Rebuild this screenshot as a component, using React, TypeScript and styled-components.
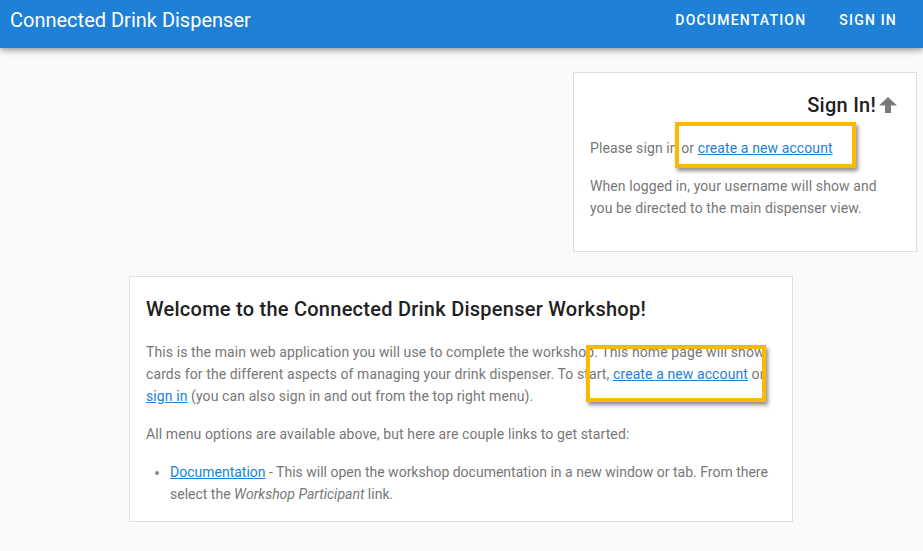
import React from "react";
import styled, { createGlobalStyle } from "styled-components";

const GlobalStyle = createGlobalStyle`
  body {
    margin: 0;
    background: #fafafa;
    font-family: Roboto, "Liberation Sans", Arial, sans-serif;
  }
`;

const AppBar = styled.header`
  height: 48px;
  box-sizing: border-box;
  padding: 0 10px 8px;
  background: #1e80d6;
  color: #ffffff;
  display: flex;
  align-items: center;
  justify-content: space-between;
  box-shadow: 0 2px 4px -1px rgba(0, 0, 0, 0.2), 0 4px 5px 0 rgba(0, 0, 0, 0.14),
    0 1px 10px 0 rgba(0, 0, 0, 0.12);
`;

const Title = styled.h1`
  margin: 0;
  font-size: 20px;
  font-weight: 400;
`;

const Nav = styled.nav`
  display: flex;
  gap: 1px;
  margin-right: 16px;
`;

const NavButton = styled.a`
  color: #ffffff;
  font-size: 14px;
  font-weight: 500;
  letter-spacing: 1.2px;
  text-transform: uppercase;
  padding: 8px 16px;
  text-decoration: none;
  cursor: pointer;
  &:last-child {
    padding-right: 0;
  }
`;

const Main = styled.main`
  display: flex;
  flex-direction: column;
  padding: 24px 6px 24px 5px;
`;

const Card = styled.section<{ $width: number; $align: string }>`
  position: relative;
  box-sizing: border-box;
  width: ${(p) => p.$width}px;
  align-self: ${(p) => p.$align};
  background: #ffffff;
  border: 1px solid #e0e0e0;
  padding: 16px;
  & + & {
    margin-top: 24px;
  }
`;

const Heading = styled.h2<{ $right?: boolean }>`
  margin: 0 0 16px;
  font-size: 20px;
  line-height: 32px;
  font-weight: 500;
  color: #212121;
  letter-spacing: 0.25px;
  display: flex;
  align-items: center;
  justify-content: ${(p) => (p.$right ? "flex-end" : "flex-start")};
  gap: 3px;
  padding-right: ${(p) => (p.$right ? 3 : 0)}px;
`;

const Text = styled.p`
  margin: 0 0 16px;
  font-size: 14px;
  line-height: 22px;
  letter-spacing: 0.1px;
  color: #777777;
  &:last-child {
    margin-bottom: 0;
  }
`;

const Link = styled.a`
  color: #1e80d6;
  text-decoration: underline;
  cursor: pointer;
`;

const List = styled.ul`
  margin: 0;
  padding-left: 24px;
  font-size: 14px;
  line-height: 22px;
  color: #777777;
  li::marker {
    font-size: 13px;
    color: #888888;
  }
`;

const Highlight = styled.div<{ $left: number; $top: number; $w: number; $h: number }>`
  position: absolute;
  left: ${(p) => p.$left}px;
  top: ${(p) => p.$top}px;
  width: ${(p) => p.$w}px;
  height: ${(p) => p.$h}px;
  box-sizing: border-box;
  border: 4px solid #fbb900;
  box-shadow: 2px 3px 4px rgba(0, 0, 0, 0.45);
  pointer-events: none;
`;

const ArrowUp = () => (
  <svg width="18" height="16" viewBox="0 0 18 16" aria-hidden="true">
    <path d="M9 0 L18 8.5 H12 V16 H6 V8.5 H0 Z" fill="#7a7a7a" />
  </svg>
);

export default function App() {
  return (
    <>
      <GlobalStyle />
      <AppBar>
        <Title>Connected Drink Dispenser</Title>
        <Nav>
          <NavButton>Documentation</NavButton>
          <NavButton>Sign In</NavButton>
        </Nav>
      </AppBar>
      <Main>
        <Card $width={344} $align="flex-end">
          <Heading $right>
            Sign In! <ArrowUp />
          </Heading>
          <Text>
            Please sign in or <Link>create a new account</Link>
          </Text>
          <Text>
            When logged in, your username will show and you be directed to the
            main dispenser view.
          </Text>
          <Highlight $left={101} $top={49} $w={181} $h={46} />
        </Card>
        <Card $width={664} $align="center">
          <Heading>Welcome to the Connected Drink Dispenser Workshop!</Heading>
          <Text>
            This is the main web application you will use to complete the
            workshop. This home page will show cards for the different aspects
            of managing your drink dispenser. To start,{" "}
            <Link>create a new account</Link> or <Link>sign in</Link> (you can
            also sign in and out from the top right menu).
          </Text>
          <Text>
            All menu options are available above, but here are couple links to
            get started:
          </Text>
          <List>
            <li>
              <Link>Documentation</Link> - This will open the workshop
              documentation in a new window or tab. From there select the{" "}
              <i>Workshop Participant</i> link.
            </li>
          </List>
          <Highlight $left={456} $top={68} $w={180} $h={57} />
        </Card>
      </Main>
    </>
  );
}
